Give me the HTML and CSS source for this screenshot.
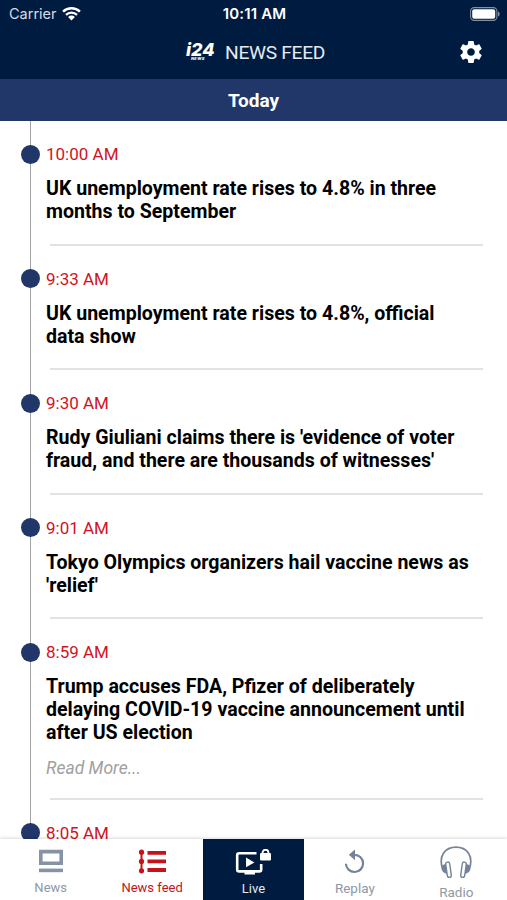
FILE: index.html
```html
<!DOCTYPE html>
<html lang="en">
<head>
    <meta charset="UTF-8">
    <meta name="viewport" content="width=device-width, initial-scale=1.0">
    <title>i24 News Feed</title>
    <link rel="stylesheet" href="styles.css">
</head>
<body>
    <header>
        <div class="status-bar">
            <div class="carrier">
                <span>Carrier</span>
                <svg class="wifi" viewBox="0 0 18 14">
                    <path d="M1 5.2a11.6 11.6 0 0 1 16 0M3.8 8.2a7.6 7.6 0 0 1 10.4 0" fill="none" stroke="#fff" stroke-width="2.3"/>
                    <path d="M9 13.6L5.8 10.3a4.6 4.6 0 0 1 6.4 0z" fill="#fff"/>
                </svg>
            </div>
            <div class="clock">10:11 AM</div>
            <svg class="battery" viewBox="0 0 30 14">
                <rect x=".6" y=".6" width="26.3" height="12.8" rx="3.6" fill="none" stroke="#8190a3" stroke-width="1.1"/>
                <rect x="2.2" y="2.2" width="23" height="9.6" rx="2" fill="#fff"/>
                <path d="M28 4.6c2.2.8 2.2 4 0 4.8z" fill="#8190a3"/>
            </svg>
        </div>
        <div class="title-bar">
            <div class="logo">
                <span class="logo-name">i24</span>
                <span class="logo-sub">NEWS</span>
            </div>
            <h1>NEWS FEED</h1>
            <svg class="settings" viewBox="2 2 20 20">
                <path fill="#fff" d="M19.43 12.98c.04-.32.07-.64.07-.98s-.03-.66-.07-.98l2.11-1.65c.19-.15.24-.42.12-.64l-2-3.46c-.12-.22-.39-.3-.61-.22l-2.49 1c-.52-.4-1.08-.73-1.69-.98l-.38-2.65C14.46 2.18 14.25 2 14 2h-4c-.25 0-.46.18-.49.42l-.38 2.65c-.61.25-1.17.59-1.69.98l-2.49-1c-.23-.09-.49 0-.61.22l-2 3.46c-.13.22-.07.49.12.64l2.11 1.65c-.04.32-.07.65-.07.98s.03.66.07.98l-2.11 1.65c-.19.15-.24.42-.12.64l2 3.46c.12.22.39.3.61.22l2.49-1c.52.4 1.08.73 1.69.98l.38 2.65c.03.24.24.42.49.42h4c.25 0 .46-.18.49-.42l.38-2.65c.61-.25 1.17-.59 1.69-.98l2.49 1c.23.09.49 0 .61-.22l2-3.46c.12-.22.07-.49-.12-.64l-2.11-1.65zM12 15.5c-1.93 0-3.5-1.57-3.5-3.5s1.57-3.5 3.5-3.5 3.5 1.57 3.5 3.5-1.57 3.5-3.5 3.5z"/>
            </svg>
        </div>
    </header>
    <div class="day">Today</div>

    <main class="feed">
        <article class="item">
            <div class="time">10:00 AM</div>
            <h2>UK unemployment rate rises to 4.8% in three<br>months to September</h2>
        </article>
        <article class="item">
            <div class="time">9:33 AM</div>
            <h2>UK unemployment rate rises to 4.8%, official<br>data show</h2>
        </article>
        <article class="item">
            <div class="time">9:30 AM</div>
            <h2>Rudy Giuliani claims there is 'evidence of voter<br>fraud, and there are thousands of witnesses'</h2>
        </article>
        <article class="item">
            <div class="time">9:01 AM</div>
            <h2>Tokyo Olympics organizers hail vaccine news as<br>'relief'</h2>
        </article>
        <article class="item">
            <div class="time">8:59 AM</div>
            <h2>Trump accuses FDA, Pfizer of deliberately<br>delaying COVID-19 vaccine announcement until<br>after US election</h2>
            <div class="more">Read More...</div>
        </article>
        <article class="item">
            <div class="time">8:05 AM</div>
        </article>
    </main>

    <nav class="tabs">
        <a class="tab">
            <svg width="26" height="26" viewBox="0 0 26 26">
                <path d="M2.8 2.6h20.4v11.6H2.8z" fill="none" stroke="#8693a6" stroke-width="3.6"/>
                <path d="M1 19.6h24v3.6H1z" fill="#8693a6"/>
            </svg>
            <span>News</span>
        </a>
        <a class="tab active">
            <svg width="28" height="26" viewBox="0 0 28 26">
                <path d="M3.5 3v20" stroke="#c4131b" stroke-width="2"/>
                <path d="M9.5 3.8H28M9.5 12.4H28M9.5 21H28" stroke="#c4131b" stroke-width="3.8"/>
                <circle cx="3.5" cy="3.2" r="2.6" fill="#c4131b"/>
                <circle cx="3.5" cy="12.4" r="2.6" fill="#c4131b"/>
                <circle cx="3.5" cy="21.8" r="2.6" fill="#c4131b"/>
            </svg>
            <span>News feed</span>
        </a>
        <a class="tab live">
            <svg width="36" height="26" viewBox="0 0 36 26">
                <path d="M21.5 4.2H4.2a2 2 0 0 0-2 2v14.2a2 2 0 0 0 2 2h20a2 2 0 0 0 2-2V15" fill="none" stroke="#fff" stroke-width="2.6"/>
                <path d="M9.5 22h10.5v3.5H9.5zM11 8.6v9.6l8.4-4.8z" fill="#fff"/>
                <rect x="25" y="4" width="11" height="7.4" rx="1.2" fill="#fff"/>
                <path d="M27.6 5V3.6a2.9 2.9 0 0 1 5.8 0V5" fill="none" stroke="#fff" stroke-width="1.9"/>
            </svg>
            <span>Live</span>
        </a>
        <a class="tab replay">
            <svg width="22" height="26" viewBox="0 0 22 26">
                <path d="M10.5 5.8a8.6 8.6 0 1 1-8.6 8.9" fill="none" stroke="#748399" stroke-width="2.2"/>
                <path d="M11 .4v10.8L4.8 5.8z" fill="#748399"/>
            </svg>
            <span>Replay</span>
        </a>
        <a class="tab radio">
            <svg width="32" height="32" viewBox="0 0 32 32">
                <path d="M2.4 22C-1.5 10 5 1.2 16 1.2S33.5 10 29.6 22" fill="none" stroke="#748399" stroke-width="1.7"/>
                <path d="M6 18c-4 .5-5 3-4.3 5.5s2.8 4 6 4.5zM26 18c4 .5 5 3 4.3 5.5s-2.8 4-6 4.5z" fill="#748399"/>
                <rect x="6.5" y="16" width="4" height="15.5" rx="2" transform="rotate(-8 8.5 23.7)" fill="#fff" stroke="#748399" stroke-width="1.4"/>
                <rect x="21.5" y="16" width="4" height="15.5" rx="2" transform="rotate(8 23.5 23.7)" fill="#fff" stroke="#748399" stroke-width="1.4"/>
            </svg>
            <span>Radio</span>
        </a>
    </nav>
</body>
</html>
```
FILE: styles.css
```css
* {
    box-sizing: border-box;
}
body {
    display: flex;
    flex-direction: column;
    height: 900px;
    margin: 0;
    overflow: hidden;
    background-color: #fff;
    font-family: Roboto, "Liberation Sans", sans-serif;
}
header {
    height: 79px;
    background-color: #001b40;
    color: #fff;
    flex-shrink: 0;
}
.status-bar {
    display: grid;
    grid-template-columns: 1fr auto 1fr;
    align-items: center;
    height: 27px;
    padding: 0 7px 0 9px;
    font-family: Inter, sans-serif;
    font-size: 14.5px;
}
.carrier {
    display: flex;
    align-items: center;
    gap: 5px;
    color: #d5dce5;
}
.wifi {
    width: 19px;
    height: 15px;
}
.clock {
    font-size: 15px;
    font-weight: 600;
    letter-spacing: 0.15px;
}
.battery {
    width: 30px;
    height: 14px;
    justify-self: end;
}
.title-bar {
    display: flex;
    align-items: center;
    height: 50px;
    padding: 0 25px 0 186px;
}
.logo {
    display: flex;
    flex-direction: column;
    width: 30px;
    margin-right: 9px;
    font-family: Inter, sans-serif;
    font-style: italic;
    font-weight: 800;
}
.logo-name {
    height: 14px;
    font-size: 18px;
    line-height: 13px;
}
.logo-sub {
    padding-left: 5px;
    font-size: 4px;
    line-height: 4px;
    letter-spacing: 0.3px;
}
h1 {
    margin: 0;
    padding-top: 1px;
    font-size: 19.2px;
    font-weight: 400;
    line-height: 24px;
    letter-spacing: -0.3px;
    color: #e6eaf0;
}
.settings {
    width: 22px;
    height: 22px;
    margin-left: auto;
}
.day {
    height: 42px;
    line-height: 43px;
    flex-shrink: 0;
    background-color: #213669;
    color: #fff;
    font-size: 19px;
    font-weight: 700;
    text-align: center;
}
.feed {
    position: relative;
    flex: 1;
    min-height: 0;
    padding-top: 0.4px;
    overflow: hidden;
}
/* timeline */
.feed::before {
    content: "";
    position: absolute;
    top: 0;
    bottom: 0;
    left: 30px;
    width: 1px;
    background-color: #a3a3a5;
}
.item {
    position: relative;
    padding: 23px 0 21.9px 46px;
}
.item::before {
    content: "";
    position: absolute;
    top: 23.6px;
    left: 21px;
    width: 19px;
    height: 19px;
    border-radius: 50%;
    background-color: #213669;
}
.item::after {
    content: "";
    position: absolute;
    left: 50px;
    right: 24px;
    bottom: 0.2px;
    height: 2px;
    background-color: #e2e2e4;
}
.time {
    height: 20px;
    line-height: 20px;
    font-size: 17px;
    color: #d0131f;
}
h2 {
    margin: 14px 0 0;
    font-size: 19.57px;
    line-height: 22.8px;
    font-weight: 700;
    color: #000;
    white-space: nowrap;
}
.more {
    margin-top: 13px;
    height: 20.2px;
    line-height: 20px;
    font-size: 17.5px;
    font-style: italic;
    color: #a0a0a0;
}
.tabs {
    display: grid;
    grid-template-columns: repeat(5, 1fr);
    height: 61px;
    flex-shrink: 0;
    background-color: #fff;
    box-shadow: 0 -1px 3px rgba(0, 0, 0, 0.15);
    z-index: 1;
}
.tab {
    display: flex;
    flex-direction: column;
    align-items: center;
    padding-top: 10px;
    font-size: 13px;
    line-height: 16px;
    color: #8f98a5;
}
.tab span {
    margin-top: 5px;
}
.active {
    color: #c4131b;
}
.live {
    background-color: #001b40;
    color: #e6eaf0;
}
.replay,
.radio {
    font-size: 13.5px;
}
.radio {
    padding-top: 7px;
}
.live span,
.radio span {
    margin-top: 6px;
}
```
